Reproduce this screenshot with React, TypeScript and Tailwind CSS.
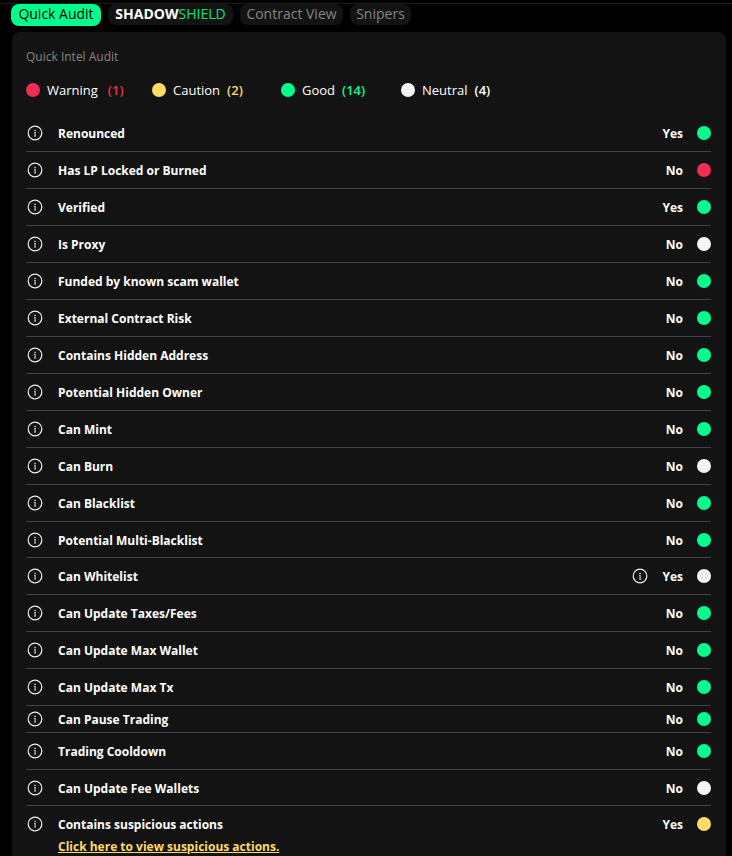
type Level = "good" | "warning" | "caution" | "neutral";

type Check = {
  label: string;
  value: "Yes" | "No";
  level: Level;
  height?: string;
  note?: boolean;
};

const dotColor: Record<Level, string> = {
  good: "bg-[#00ff8c]",
  warning: "bg-[#f02d55]",
  caution: "bg-[#ffdc64]",
  neutral: "bg-[#f5f5f5]",
};

const checks: Check[] = [
  { label: "Renounced", value: "Yes", level: "good" },
  { label: "Has LP Locked or Burned", value: "No", level: "warning" },
  { label: "Verified", value: "Yes", level: "good" },
  { label: "Is Proxy", value: "No", level: "neutral" },
  { label: "Funded by known scam wallet", value: "No", level: "good" },
  { label: "External Contract Risk", value: "No", level: "good" },
  { label: "Contains Hidden Address", value: "No", level: "good" },
  { label: "Potential Hidden Owner", value: "No", level: "good" },
  { label: "Can Mint", value: "No", level: "good" },
  { label: "Can Burn", value: "No", level: "neutral" },
  { label: "Can Blacklist", value: "No", level: "good" },
  { label: "Potential Multi-Blacklist", value: "No", level: "good", height: "h-9" },
  { label: "Can Whitelist", value: "Yes", level: "neutral", note: true },
  { label: "Can Update Taxes/Fees", value: "No", level: "good" },
  { label: "Can Update Max Wallet", value: "No", level: "good" },
  { label: "Can Update Max Tx", value: "No", level: "good" },
  { label: "Can Pause Trading", value: "No", level: "good", height: "h-[27px]" },
  { label: "Trading Cooldown", value: "No", level: "good" },
  { label: "Can Update Fee Wallets", value: "No", level: "neutral", height: "h-9" },
];

function Dot({ level }: { level: Level }) {
  return <span className={`size-[14px] shrink-0 rounded-full ${dotColor[level]}`} />;
}

function InfoButton({ label }: { label: string }) {
  return (
    <button type="button" aria-label={`About ${label}`} className="shrink-0">
      <svg viewBox="0 0 16 16" className="block size-4" fill="none" aria-hidden="true">
        <circle cx="8" cy="8" r="6.8" stroke="#f0f0f0" strokeWidth="1.2" />
        <rect x="7.3" y="4.8" width="1.5" height="1.4" fill="#d0d0d0" />
        <path d="M7.1 7.5h1v3.5M7.1 11h1.9" stroke="#d0d0d0" strokeWidth="1.1" />
      </svg>
    </button>
  );
}

function CheckLine({ label, value, level, note }: Check) {
  return (
    <>
      <InfoButton label={label} />
      <span className="ml-[15px] flex-1 pt-[2px]">{label}</span>
      {note && <InfoButton label={`${label} result`} />}
      <span className="w-[35px] pt-[2px] text-right">{value}</span>
      <span className="ml-[14px] flex">
        <Dot level={level} />
      </span>
    </>
  );
}

type LegendProps = { level: Level; name: string; count: number; countStyle: string; width?: string };

function Legend({ level, name, count, countStyle, width = "" }: LegendProps) {
  return (
    <li className={`flex items-center ${width}`}>
      <Dot level={level} />
      <span className="ml-[7px]">{name}</span>
      <span className={`font-semibold ${countStyle}`}>({count})</span>
    </li>
  );
}

export default function App() {
  return (
    <div className="flex min-h-screen flex-col bg-black pt-[3px] font-['Open_Sans','Noto_Sans',sans-serif] text-xs leading-5 text-white">
      <nav className="flex items-start gap-[7px] border-t border-[#1b1b1b] pl-[11px] text-sm leading-5">
        <button type="button" className="h-[22px] w-[90px] rounded-lg bg-[#00ff8c] pb-[2px] text-black">
          Quick Audit
        </button>
        <button type="button" className="h-[21px] w-[125px] rounded-lg bg-[#131313] pb-[2px] text-[#00e676]">
          <span className="font-bold text-white">SHADOW</span>SHIELD
        </button>
        <button type="button" className="h-[21px] w-[103px] rounded-lg bg-[#131313] pb-[2px] text-[#858585]">
          Contract View
        </button>
        <button type="button" className="h-[21px] w-[61px] rounded-lg bg-[#131313] pb-[2px] text-[#858585]">
          Snipers
        </button>
      </nav>

      <main className="mt-[6px] mr-[6px] ml-3 flex-1 rounded-t-lg bg-[#131313] pr-[15px] pl-[14px]">
        <h1 className="pt-[15px] text-xs leading-5 text-[#858585]">Quick Intel Audit</h1>
        <ul className="mt-[13px] flex text-[13px] leading-5">
          <Legend level="warning" name="Warning" count={1} countStyle="ml-[10px] text-[#f02d55]" width="w-[126px]" />
          <Legend level="caution" name="Caution" count={2} countStyle="ml-[7px] text-[#ffdc64]" width="w-[129px]" />
          <Legend level="good" name="Good" count={14} countStyle="ml-[7px] text-[#00ff8c]" width="w-[120px]" />
          <Legend level="neutral" name="Neutral" count={4} countStyle="ml-[7px] text-white" />
        </ul>

        <ul className="mt-[15px] font-bold">
          {checks.map((check) => (
            <li
              key={check.label}
              className={`flex items-center border-b border-[#434343] pl-px ${check.height ?? "h-[37px]"}`}
            >
              <CheckLine {...check} />
            </li>
          ))}
          <li className="pt-[7px] pl-px">
            <div className="flex items-center">
              <CheckLine label="Contains suspicious actions" value="Yes" level="caution" />
            </div>
            <a href="#actions" className="ml-[31px] block w-fit pt-[2px] text-[#ffdc64] underline">
              Click here to view suspicious actions.
            </a>
          </li>
        </ul>
      </main>
    </div>
  );
}
